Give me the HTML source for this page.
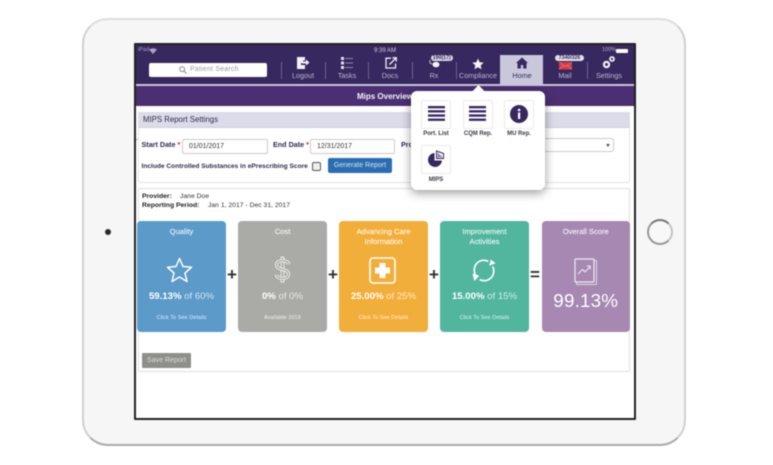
<!DOCTYPE html>
<html><head><meta charset="utf-8">
<style>
html,body{margin:0;padding:0;background:#fff}
#p{position:relative;width:773px;height:465px;overflow:hidden;background:#fff;font-family:"Liberation Sans",sans-serif;filter:blur(.4px)}
#p div,#p svg,#p span.a{position:absolute}
.t{white-space:nowrap;line-height:1}
.c{text-align:center;transform:translateX(-50%)}
.nl{color:#bdb8d2;font-size:7.2px;top:71.5px}
.sep{width:1px;background:#6c6090;top:62px;height:17px}
.card{top:221px;height:111px;border-radius:4px}
.ct{font-size:7.6px;color:rgba(255,255,255,.85);left:0;right:0;text-align:center;line-height:10px;font-weight:normal;-webkit-text-stroke:.15px rgba(255,255,255,.7)}
.cv{color:rgba(255,255,255,.75);font-size:9.6px;left:0;right:0;text-align:center;top:70.5px;line-height:1;white-space:nowrap}
.cv b{color:#fff;font-weight:bold}
.cf{color:rgba(255,255,255,.85);font-size:5.4px;left:0;right:0;text-align:center;top:94.5px;line-height:1;letter-spacing:.1px}
.op{font-weight:bold;font-size:17px;color:#333;line-height:1;top:266px}
.tile{width:28px;height:27px;border:1px solid #ebebeb;border-radius:2px;background:#fff}
.pl{font-size:6px;color:#3a3a4a;font-weight:bold;top:131px;letter-spacing:-.05px}
.lb{font-size:7.2px;font-weight:bold;color:#332a55}
.inp{background:#fff;border:1px solid #ccc;border-radius:2px;height:13px;font-size:7px;color:#333;line-height:13px;padding-left:6px;box-sizing:content-box}
.bdg{height:6.5px;line-height:6.5px;font-size:5.2px;font-weight:bold;color:#33285a;border-radius:4px;text-align:center;white-space:nowrap;top:54.7px}
</style></head><body>
<div id="p">
<!-- device -->
<div style="left:82px;top:18px;width:604px;height:428px;border-radius:26px;background:#f6f6f6;box-sizing:border-box;border:2px solid #d0d0ce;border-bottom-color:#aaaaa8;border-top-color:#dededc"></div>
<div style="left:105px;top:229px;width:6px;height:6px;border-radius:50%;background:#2b2b30"></div>
<div style="left:646.5px;top:218.5px;width:26px;height:26px;border-radius:50%;box-sizing:border-box;border:2px solid #999;border-top-color:#777;border-right-color:#c2c2c2;background:#f8f8f8"></div>
<!-- screen -->
<div style="left:134px;top:43px;width:502px;height:377px;background:#222;border-radius:1px"></div>
<div id="s" style="left:136px;top:45px;width:498px;height:373px;background:#fff;overflow:hidden">
 <div style="left:0;top:0;width:498px;height:39px;background:#37285f"></div>
 <div style="left:0;top:39px;width:498px;height:2px;background:#c9c6da"></div>
 <div style="left:0;top:41px;width:498px;height:20px;background:#4b2f72"></div>
 <div class="t c" style="left:249px;top:48px;color:#fff;font-size:8px;font-weight:bold;opacity:.95">Mips Overview</div>
 <div class="t" style="left:2px;top:3px;color:#a8a3c0;font-size:5.5px">iPad</div>
 <svg style="left:13px;top:3px" width="8" height="6" viewBox="0 0 8 6"><path d="M0 1.5Q4 -1 8 1.5L4 6Z" fill="#a8a3c0"/></svg>
 <div class="t c" style="left:249px;top:3px;color:#cfcbe0;font-size:6px">9:39 AM</div>
 <div class="t" style="left:466px;top:3px;color:#b9b4cf;font-size:5.5px">100%</div>
 <div style="left:480px;top:4px;width:12px;height:4px;background:#fff;border-radius:1px"></div>
</div>
<div style="left:136px;top:139px;width:20px;height:1px;background:#b5b5b5"></div>
<div style="left:149px;top:62.5px;width:118px;height:14.5px;background:#fff;border-radius:2px"></div>
<svg style="left:179px;top:66px" width="8" height="8" viewBox="0 0 8 8"><circle cx="3.2" cy="3.2" r="2.4" fill="none" stroke="#888" stroke-width="1"/><path d="M5 5L7.5 7.5" stroke="#888" stroke-width="1"/></svg>
<div class="t" style="left:190px;top:66px;font-size:7px;color:#999;letter-spacing:.2px">Patient Search</div>
<div class="sep" style="left:281px"></div><div class="sep" style="left:325px"></div><div class="sep" style="left:368px"></div><div class="sep" style="left:412px"></div><div class="sep" style="left:456px"></div><div class="sep" style="left:587px"></div>
<!-- nav icons -->
<svg style="left:297px;top:57px" width="13" height="12" viewBox="0 0 13 12"><path d="M0 0H8V3.5H6V6H4V8H8V12H0Z" fill="#f2f1f7"/><path d="M5 4.5H9V2.5L12.5 5.5L9 8.5V6.5H5Z" fill="#f2f1f7"/></svg>
<svg style="left:341px;top:57px" width="12" height="12" viewBox="0 0 12 12"><g fill="#e3e1ee"><rect x="0" y="0" width="3" height="3"/><rect x="0" y="4.5" width="3" height="3"/><rect x="0" y="9" width="3" height="3"/></g><g stroke="#8d86ab" stroke-width="1"><path d="M4 1.5H12M4 6H12M4 10.5H12"/></g></svg>
<svg style="left:385px;top:57px" width="12" height="12" viewBox="0 0 12 12"><path d="M6 1.2H1V11H10.5V6.5" fill="none" stroke="#eeedf4" stroke-width="1.3"/><path d="M4.5 7.5L11 1M7.5 .8H11.3V4.5" fill="none" stroke="#eeedf4" stroke-width="1.3"/></svg>
<svg style="left:428px;top:54px" width="14" height="15" viewBox="0 0 14 15"><path d="M2 6Q1 9 4 10" fill="none" stroke="#ccc" stroke-width="1"/><ellipse cx="8" cy="10.5" rx="3.5" ry="2.8" fill="#f4f4f8"/></svg>
<div class="bdg" style="left:430.5px;width:22.5px;background:#d8d6e2">190(17)</div>
<svg style="left:472px;top:57.5px" width="12" height="12" viewBox="0 0 24 24"><path d="M12 1L15.3 8.4L23.3 9.3L17.3 14.7L19 22.6L12 18.5L5 22.6L6.7 14.7L.7 9.3L8.7 8.4Z" fill="#f5f5fa"/></svg>
<div style="left:500px;top:55px;width:43px;height:30px;background:#c9c7dc"></div>
<svg style="left:516px;top:57px" width="12" height="12" viewBox="0 0 12 12"><path d="M6 .5L12 6H10.5V11.5H7.2V8H4.8V11.5H1.5V6H0Z" fill="#37285f"/></svg>
<svg style="left:558.5px;top:62px" width="13" height="7.5" viewBox="0 0 14 8"><rect width="14" height="8" fill="#d33b46"/><path d="M0 0L7 5L14 0M0 8L5 3.5M14 8L9 3.5" fill="none" stroke="#e8797f" stroke-width=".7"/></svg>
<div class="bdg" style="left:555px;width:29px;background:#e3e1ea">7340/326</div>
<svg style="left:602px;top:55px" width="14" height="14" viewBox="0 0 14 14"><circle cx="4.5" cy="9.5" r="2.6" fill="none" stroke="#f0eff6" stroke-width="2.2"/><circle cx="10" cy="4" r="2" fill="none" stroke="#f0eff6" stroke-width="1.8"/></svg>
<div class="t c nl" style="left:303px">Logout</div>
<div class="t c nl" style="left:347px">Tasks</div>
<div class="t c nl" style="left:390px">Docs</div>
<div class="t c nl" style="left:434px">Rx</div>
<div class="t c nl" style="left:478px">Compliance</div>
<div class="t c nl" style="left:522px;color:#33285a">Home</div>
<div class="t c nl" style="left:565px">Mail</div>
<div class="t c nl" style="left:609px">Settings</div>
<!-- settings panel -->
<div style="left:138px;top:112px;width:492px;height:71px;border:1px solid #e3e3e3;box-sizing:border-box;border-radius:2px;background:#fff"></div>
<div style="left:138px;top:112px;width:492px;height:16px;background:#dcdbe9;border-bottom:1px solid #cfcfd8;box-sizing:border-box"></div>
<div class="t" style="left:143px;top:116px;font-size:7.8px;color:#332d4c">MIPS Report Settings</div>
<div class="t lb" style="left:141.5px;top:141px">Start Date <span style="color:#d2232a">*</span></div>
<div class="inp" style="left:182px;top:138.5px;width:78px">01/01/2017</div>
<div class="t lb" style="left:273px;top:141px">End Date <span style="color:#d2232a">*</span></div>
<div class="inp" style="left:310px;top:138.5px;width:77px">12/31/2017</div>
<div class="t lb" style="left:401px;top:141px">Pro</div>
<div style="left:540px;top:138px;width:74px;height:14px;border:1px solid #ccc;border-left:0;border-radius:0 3px 3px 0;background:#fff;box-sizing:border-box"></div>
<div style="left:606px;top:144px;width:0;height:0;border-left:2px solid transparent;border-right:2px solid transparent;border-top:3px solid #555"></div>
<div class="t lb" style="left:141.5px;top:163.5px;font-size:6.6px">Include Controlled Substances in ePrescribing Score</div>
<div style="left:312px;top:162px;width:9px;height:9px;box-sizing:border-box;border:1px solid #555;border-radius:2px;background:#eee"></div>
<div class="t" style="left:328px;top:157.5px;width:64px;height:15px;background:#2a6db0;border-radius:2px;color:#d8e6f3;font-size:7px;line-height:15px;text-align:center">Generate Report</div>
<!-- report panel -->
<div style="left:138px;top:188px;width:492px;height:184px;border:1px solid #e0e0e0;box-sizing:border-box;border-radius:2px;background:#fff"></div>
<div class="t lb" style="left:142px;top:193.5px;color:#222;font-size:6.8px">Provider:</div>
<div class="t" style="left:180px;top:193.5px;color:#333;font-size:6.8px">Jane Doe</div>
<div class="t lb" style="left:142px;top:202.5px;color:#222;font-size:6.8px">Reporting Period:</div>
<div class="t" style="left:208px;top:202.5px;color:#333;font-size:6.8px">Jan 1, 2017 - Dec 31, 2017</div>
<!-- cards -->
<div class="card" style="left:137px;width:89px;background:#5b9ac9">
 <div class="ct" style="top:6px">Quality</div>
 <svg style="left:29px;top:36px" width="27" height="26" viewBox="0 0 27 26"><path d="M13.5 1.5L17 9.5L25.5 10.3L19 16L21 24.5L13.5 20L6 24.5L8 16L1.5 10.3L10 9.5Z" fill="none" stroke="#fff" stroke-width="1.5" stroke-linejoin="round"/></svg>
 <div class="cv"><b>59.13%</b> of 60%</div>
 <div class="cf">Click To See Details</div>
</div>
<div class="card" style="left:238px;width:89px;background:#aaaaa6">
 <div class="ct" style="top:6px">Cost</div>
 <svg style="left:35px;top:35px" width="19" height="27" viewBox="0 0 20 29"><path d="M8.5 1H11.5V28H8.5Z" fill="none" stroke="#f3f3f1" stroke-width=".9"/><path d="M16.5 9C16.5 6.5 13.5 5 10 5S3.5 6.5 3.5 9.5C3.5 13 7 13.5 10 14.5S16.5 16 16.5 19.5C16.5 22.5 13.5 24 10 24S3.5 22.5 3.5 20" fill="none" stroke="#f3f3f1" stroke-width="3.4"/><path d="M16.5 9C16.5 6.5 13.5 5 10 5S3.5 6.5 3.5 9.5C3.5 13 7 13.5 10 14.5S16.5 16 16.5 19.5C16.5 22.5 13.5 24 10 24S3.5 22.5 3.5 20" fill="none" stroke="#aaaaa6" stroke-width="1.5"/></svg>
 <div class="cv"><b>0%</b> of 0%</div>
 <div class="cf">Available 2018</div>
</div>
<div class="card" style="left:339px;width:89px;background:#f2ae3a">
 <div class="ct" style="top:6px">Advancing Care<br>Information</div>
 <svg style="left:30px;top:36px" width="27" height="27" viewBox="0 0 27 27"><rect x="1" y="1" width="25" height="25" rx="3" fill="none" stroke="#fff" stroke-width="1.6"/><path d="M10.5 6H16.5V10.5H21V16.5H16.5V21H10.5V16.5H6V10.5H10.5Z" fill="#fff"/></svg>
 <div class="cv"><b>25.00%</b> of 25%</div>
 <div class="cf">Click To See Details</div>
</div>
<div class="card" style="left:440px;width:89px;background:#52b69f">
 <div class="ct" style="top:6px">Improvement<br>Activities</div>
 <svg style="left:31px;top:37px" width="26" height="25" viewBox="0 0 26 26"><path d="M4 17A10 10 0 0 1 17.5 3.5" fill="none" stroke="#fff" stroke-width="1.7"/><path d="M22 9A10 10 0 0 1 8.5 22.5" fill="none" stroke="#fff" stroke-width="1.7"/><path d="M18.5 8L25 5.5L20 1.5Z" fill="#fff"/><path d="M1 13L3 21L8 15.5Z" fill="#fff" transform="translate(0 3)"/></svg>
 <div class="cv"><b>15.00%</b> of 15%</div>
 <div class="cf">Click To See Details</div>
</div>
<div class="card" style="left:541.5px;width:88.5px;background:#a688b2">
 <div class="ct" style="top:6px">Overall Score</div>
 <svg style="left:32px;top:37px" width="24" height="27" viewBox="0 0 24 27"><rect x="2.5" y="2.5" width="20" height="24" rx="1" fill="none" stroke="#e3d8e7" stroke-width="1"/><rect x="1" y="1" width="19" height="23" rx="1" fill="#a688b2" stroke="#f0eaf2" stroke-width="1.2"/><path d="M4 16L8.5 11.5L11 14L16 8.5M12.8 8H16.2V11.5" fill="none" stroke="#f0eaf2" stroke-width="1"/></svg>
 <div style="left:0;right:0;top:71px;text-align:center;color:#fff;font-size:18.8px;line-height:1;letter-spacing:.2px;white-space:nowrap">99.13%</div>
</div>
<div class="t c op" style="left:232px">+</div>
<div class="t c op" style="left:333px">+</div>
<div class="t c op" style="left:434px">+</div>
<div class="t c op" style="left:535px">=</div>
<div class="t" style="left:142px;top:353px;width:49px;height:15px;background:#8e8e8a;border-radius:1px;color:#ddd;font-size:7px;line-height:15px;text-align:center">Save Report</div>
<!-- popover -->
<div style="left:411px;top:91px;width:134px;height:99px;background:#fff;border-radius:6px;box-shadow:0 3px 10px rgba(0,0,0,.4)"></div>
<div style="left:473.5px;top:86.5px;width:9px;height:9px;background:#fff;transform:rotate(45deg)"></div>
<div class="tile" style="left:421px;top:100px"></div>
<div class="tile" style="left:463px;top:100px"></div>
<div class="tile" style="left:504px;top:100px"></div>
<div class="tile" style="left:421px;top:145px"></div>
<svg style="left:427.5px;top:106px" width="17" height="15" viewBox="0 0 17 15"><g fill="#37285f"><rect y="0" width="17" height="2.3"/><rect y="4.2" width="17" height="2.3"/><rect y="8.4" width="17" height="2.3"/><rect y="12.6" width="17" height="2.3"/></g></svg>
<svg style="left:469px;top:106px" width="17" height="15" viewBox="0 0 17 15"><g fill="#37285f"><rect y="0" width="17" height="2.3"/><rect y="4.2" width="17" height="2.3"/><rect y="8.4" width="17" height="2.3"/><rect y="12.6" width="17" height="2.3"/></g></svg>
<svg style="left:510px;top:105px" width="18" height="18" viewBox="0 0 18 18"><circle cx="9" cy="9" r="9" fill="#37285f"/><rect x="8" y="7.5" width="2.2" height="6.5" fill="#fff"/><circle cx="9.1" cy="5" r="1.3" fill="#fff"/></svg>
<svg style="left:427px;top:150px" width="18" height="18" viewBox="0 0 18 18"><path d="M7.5 3A7 7 0 1 0 15 10.5H7.5Z" fill="#37285f"/><path d="M9.5 1L16.5 3.5V8.5H9.5Z" fill="none" stroke="#37285f" stroke-width="1"/><path d="M10.5 2.5L15 6.5V7.5H10.5Z" fill="#8d86ab"/></svg>
<div class="t c pl" style="left:436px;top:131px">Port. List</div>
<div class="t c pl" style="left:478px;top:131px">CQM Rep.</div>
<div class="t c pl" style="left:519px;top:131px">MU Rep.</div>
<div class="t c pl" style="left:436px;top:177px">MIPS</div>
</div>
</body></html>
